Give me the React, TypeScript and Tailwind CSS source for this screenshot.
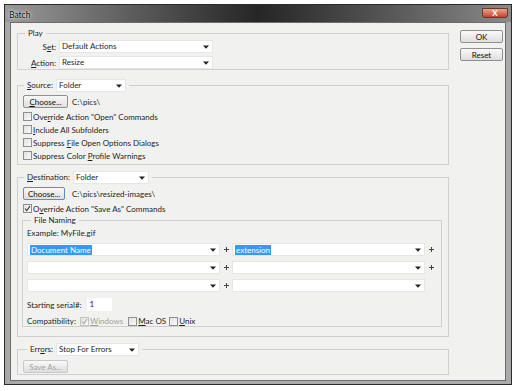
import React from "react";

const font = { fontFamily: 'Lato, "Liberation Sans", Arial, sans-serif' };

function Arrow() {
  return (
    <svg width="6" height="4" viewBox="0 0 6 4" className="shrink-0">
      <path d="M0 0.5 H6 L3 3.8 Z" fill="#222" />
    </svg>
  );
}

function Select({ w, text, hl }: { w: string; text?: string; hl?: boolean }) {
  return (
    <div className={`${w} h-[13px] bg-white border border-[#e6e6e6] flex items-center justify-between pl-[2px] pr-[3px] shrink-0`}>
      <span className={hl ? "bg-[#3399ff] text-white leading-[10px] px-[1px]" : "leading-[11px]"}>{text ?? ""}</span>
      <Arrow />
    </div>
  );
}

function Btn({ children, w, blue, disabled }: { children: React.ReactNode; w: string; blue?: boolean; disabled?: boolean }) {
  return (
    <div
      className={`${w} h-[13px] flex items-center justify-center rounded-[2px] border ${
        blue ? "border-[#5b8fc3]" : disabled ? "border-[#c8c8c8]" : "border-[#8e8f8f]"
      } bg-gradient-to-b from-[#f9f9f9] to-[#dedede] ${disabled ? "text-[#a4a4a4]" : "text-[#111]"}`}
    >
      {children}
    </div>
  );
}

function Check({ checked, disabled }: { checked?: boolean; disabled?: boolean }) {
  return (
    <div
      className={`w-[9px] h-[9px] border ${disabled ? "border-[#c4c4c4]" : "border-[#8f8f8f]"} bg-gradient-to-br from-[#e2e2e2] to-[#f8f8f8] flex items-center justify-center shrink-0`}
    >
      {checked && (
        <svg width="7" height="7" viewBox="0 0 7 7">
          <path d="M1 3.5 L2.8 5.5 L6 1" stroke={disabled ? "#a8a8a8" : "#333"} strokeWidth="1.1" fill="none" />
        </svg>
      )}
    </div>
  );
}

function Plus() {
  return (
    <div className="w-[12px] flex items-center justify-center shrink-0">
      <svg width="5" height="5" viewBox="0 0 5 5">
        <path d="M2.5 0 V5 M0 2.5 H5" stroke="#444" strokeWidth="1" />
      </svg>
    </div>
  );
}

export default function App() {
  return (
    <div className="w-[516px] h-[391px] bg-white relative text-[8px] text-[#1e1e1e]" style={font}>
      <div className="absolute left-[4px] top-[4px] w-[508px] h-[381px] border border-[#2b2b2b] bg-[#a9a9a9] flex flex-col">
        {/* title bar */}
        <div className="h-[17px] flex items-start justify-between bg-gradient-to-r from-[#9a9a9a] via-[#262626] to-[#8a8a8a] pl-[4px] pr-[3px] relative">
          <span className="text-[#111] text-[8.5px] mt-[4px]" style={{ textShadow: "0 0 4px #eee, 0 0 2px #eee" }}>Batch</span>
          <div className="w-[26px] h-[10px] mt-[3px] rounded-b-[3px] bg-gradient-to-b from-[#e8a38c] to-[#c4402a] border border-[#6b3a30] flex items-center justify-center">
            <span className="text-white text-[8px] font-bold leading-none">X</span>
          </div>
        </div>
        {/* body */}
        <div className="flex-1 mx-[5px] mb-[3px] border border-[#6d6d6d] bg-[#f1f1ef] flex px-[6px] pt-[6px] gap-[11px]">
          <div className="w-[432px] flex flex-col">
            {/* Play */}
            <fieldset className="border border-[#d0d0d0] h-[41px] px-[0px] relative">
              <legend className="ml-[7px] px-[3px] leading-[9px]">Play</legend>
              <div className="flex flex-col gap-[3px] mt-[2px]">
                <div className="flex items-center">
                  <span className="w-[41px] text-right pr-[3px]">S<span className="underline">e</span>t:</span>
                  <Select w="w-[154px]" text="Default Actions" />
                </div>
                <div className="flex items-center">
                  <span className="w-[41px] text-right pr-[3px]"><span className="underline">A</span>ction:</span>
                  <Select w="w-[154px]" text="Resize" />
                </div>
              </div>
            </fieldset>
            {/* Source */}
            <fieldset className="border border-[#d0d0d0] mt-[9px] h-[86px] px-[5px]">
              <legend className="ml-[1px] px-[3px] flex items-center gap-[3px] leading-[13px]">
                <span><span className="underline">S</span>ource:</span>
                <Select w="w-[70px]" text="Folder" />
              </legend>
              <div className="flex items-center gap-[4px] mt-[3px]">
                <Btn w="w-[45px]"><span><span className="underline">C</span>hoose...</span></Btn>
                <span>C:\pics\</span>
              </div>
              <div className="flex flex-col gap-[4px] mt-[4px]">
                {[
                  <>Ove<span className="underline">r</span>ride Action "Open" Commands</>,
                  <><span className="underline">I</span>nclude All Subfolders</>,
                  <>Suppress <span className="underline">F</span>ile Open Options Dialogs</>,
                  <>Suppress Color <span className="underline">P</span>rofile Warnings</>,
                ].map((t, i) => (
                  <div key={i} className="flex items-center gap-[1px] h-[9px]">
                    <Check />
                    <span>{t}</span>
                  </div>
                ))}
              </div>
            </fieldset>
            {/* Destination */}
            <fieldset className="border border-[#d0d0d0] mt-[6px] h-[166px] px-[5px]">
              <legend className="ml-[1px] px-[3px] flex items-center gap-[3px] leading-[13px]">
                <span><span className="underline">D</span>estination:</span>
                <Select w="w-[76px]" text="Folder" />
              </legend>
              <div className="flex items-center gap-[7px] mt-[3px]">
                <Btn w="w-[42px]" blue>Choose...</Btn>
                <span>C:\pics\resized-images\</span>
              </div>
              <div className="flex items-center gap-[1px] mt-[4px] h-[9px]">
                <Check checked />
                <span>O<span className="underline">v</span>erride Action "Save As" Commands</span>
              </div>
              <fieldset className="border border-[#d0d0d0] mt-[3px] h-[111px] px-[4px] ml-[-1px] mr-[1px]">
                <legend className="ml-[4px] px-[3px] leading-[9px]">File Naming</legend>
                <div className="mt-[2px]">Example: MyFile.gif</div>
                <div className="flex flex-col gap-[5px] mt-[4px]">
                  <div className="flex items-center">
                    <Select w="w-[193px]" text="Document Name" hl />
                    <Plus />
                    <Select w="w-[193px]" text="extension" hl />
                    <Plus />
                  </div>
                  <div className="flex items-center">
                    <Select w="w-[193px]" />
                    <Plus />
                    <Select w="w-[193px]" />
                    <Plus />
                  </div>
                  <div className="flex items-center">
                    <Select w="w-[193px]" />
                    <Plus />
                    <Select w="w-[193px]" />
                  </div>
                </div>
                <div className="flex items-center gap-[5px] mt-[6px]">
                  <span>Starting serial#:</span>
                  <div className="w-[25px] h-[13px] bg-white pl-[3px] leading-[13px]">1</div>
                </div>
                <div className="flex items-center mt-[4px] h-[12px]">
                  <span className="mr-[4px]">Compatibility:</span>
                  <Check checked disabled />
                  <span className="ml-[1px] mr-[5px] text-[#a0a0a0]"><span className="underline">W</span>indows</span>
                  <Check />
                  <span className="ml-[1px] mr-[3px]"><span className="underline">M</span>ac OS</span>
                  <Check />
                  <span className="ml-[1px]"><span className="underline">U</span>nix</span>
                </div>
              </fieldset>
            </fieldset>
            {/* Errors */}
            <fieldset className="border border-[#d0d0d0] mt-[6px] h-[32px] px-[5px]">
              <legend className="ml-[4px] px-[3px] flex items-center gap-[3px] leading-[13px]">
                <span>Err<span className="underline">o</span>rs:</span>
                <Select w="w-[83px]" text="Stop For Errors" />
              </legend>
              <div className="mt-[4px]">
                <Btn w="w-[45px]" disabled>Save As...</Btn>
              </div>
            </fieldset>
          </div>
          <div className="flex flex-col gap-[5px] pt-[1px]">
            <Btn w="w-[43px]">OK</Btn>
            <Btn w="w-[43px]">Reset</Btn>
          </div>
        </div>
      </div>
    </div>
  );
}
